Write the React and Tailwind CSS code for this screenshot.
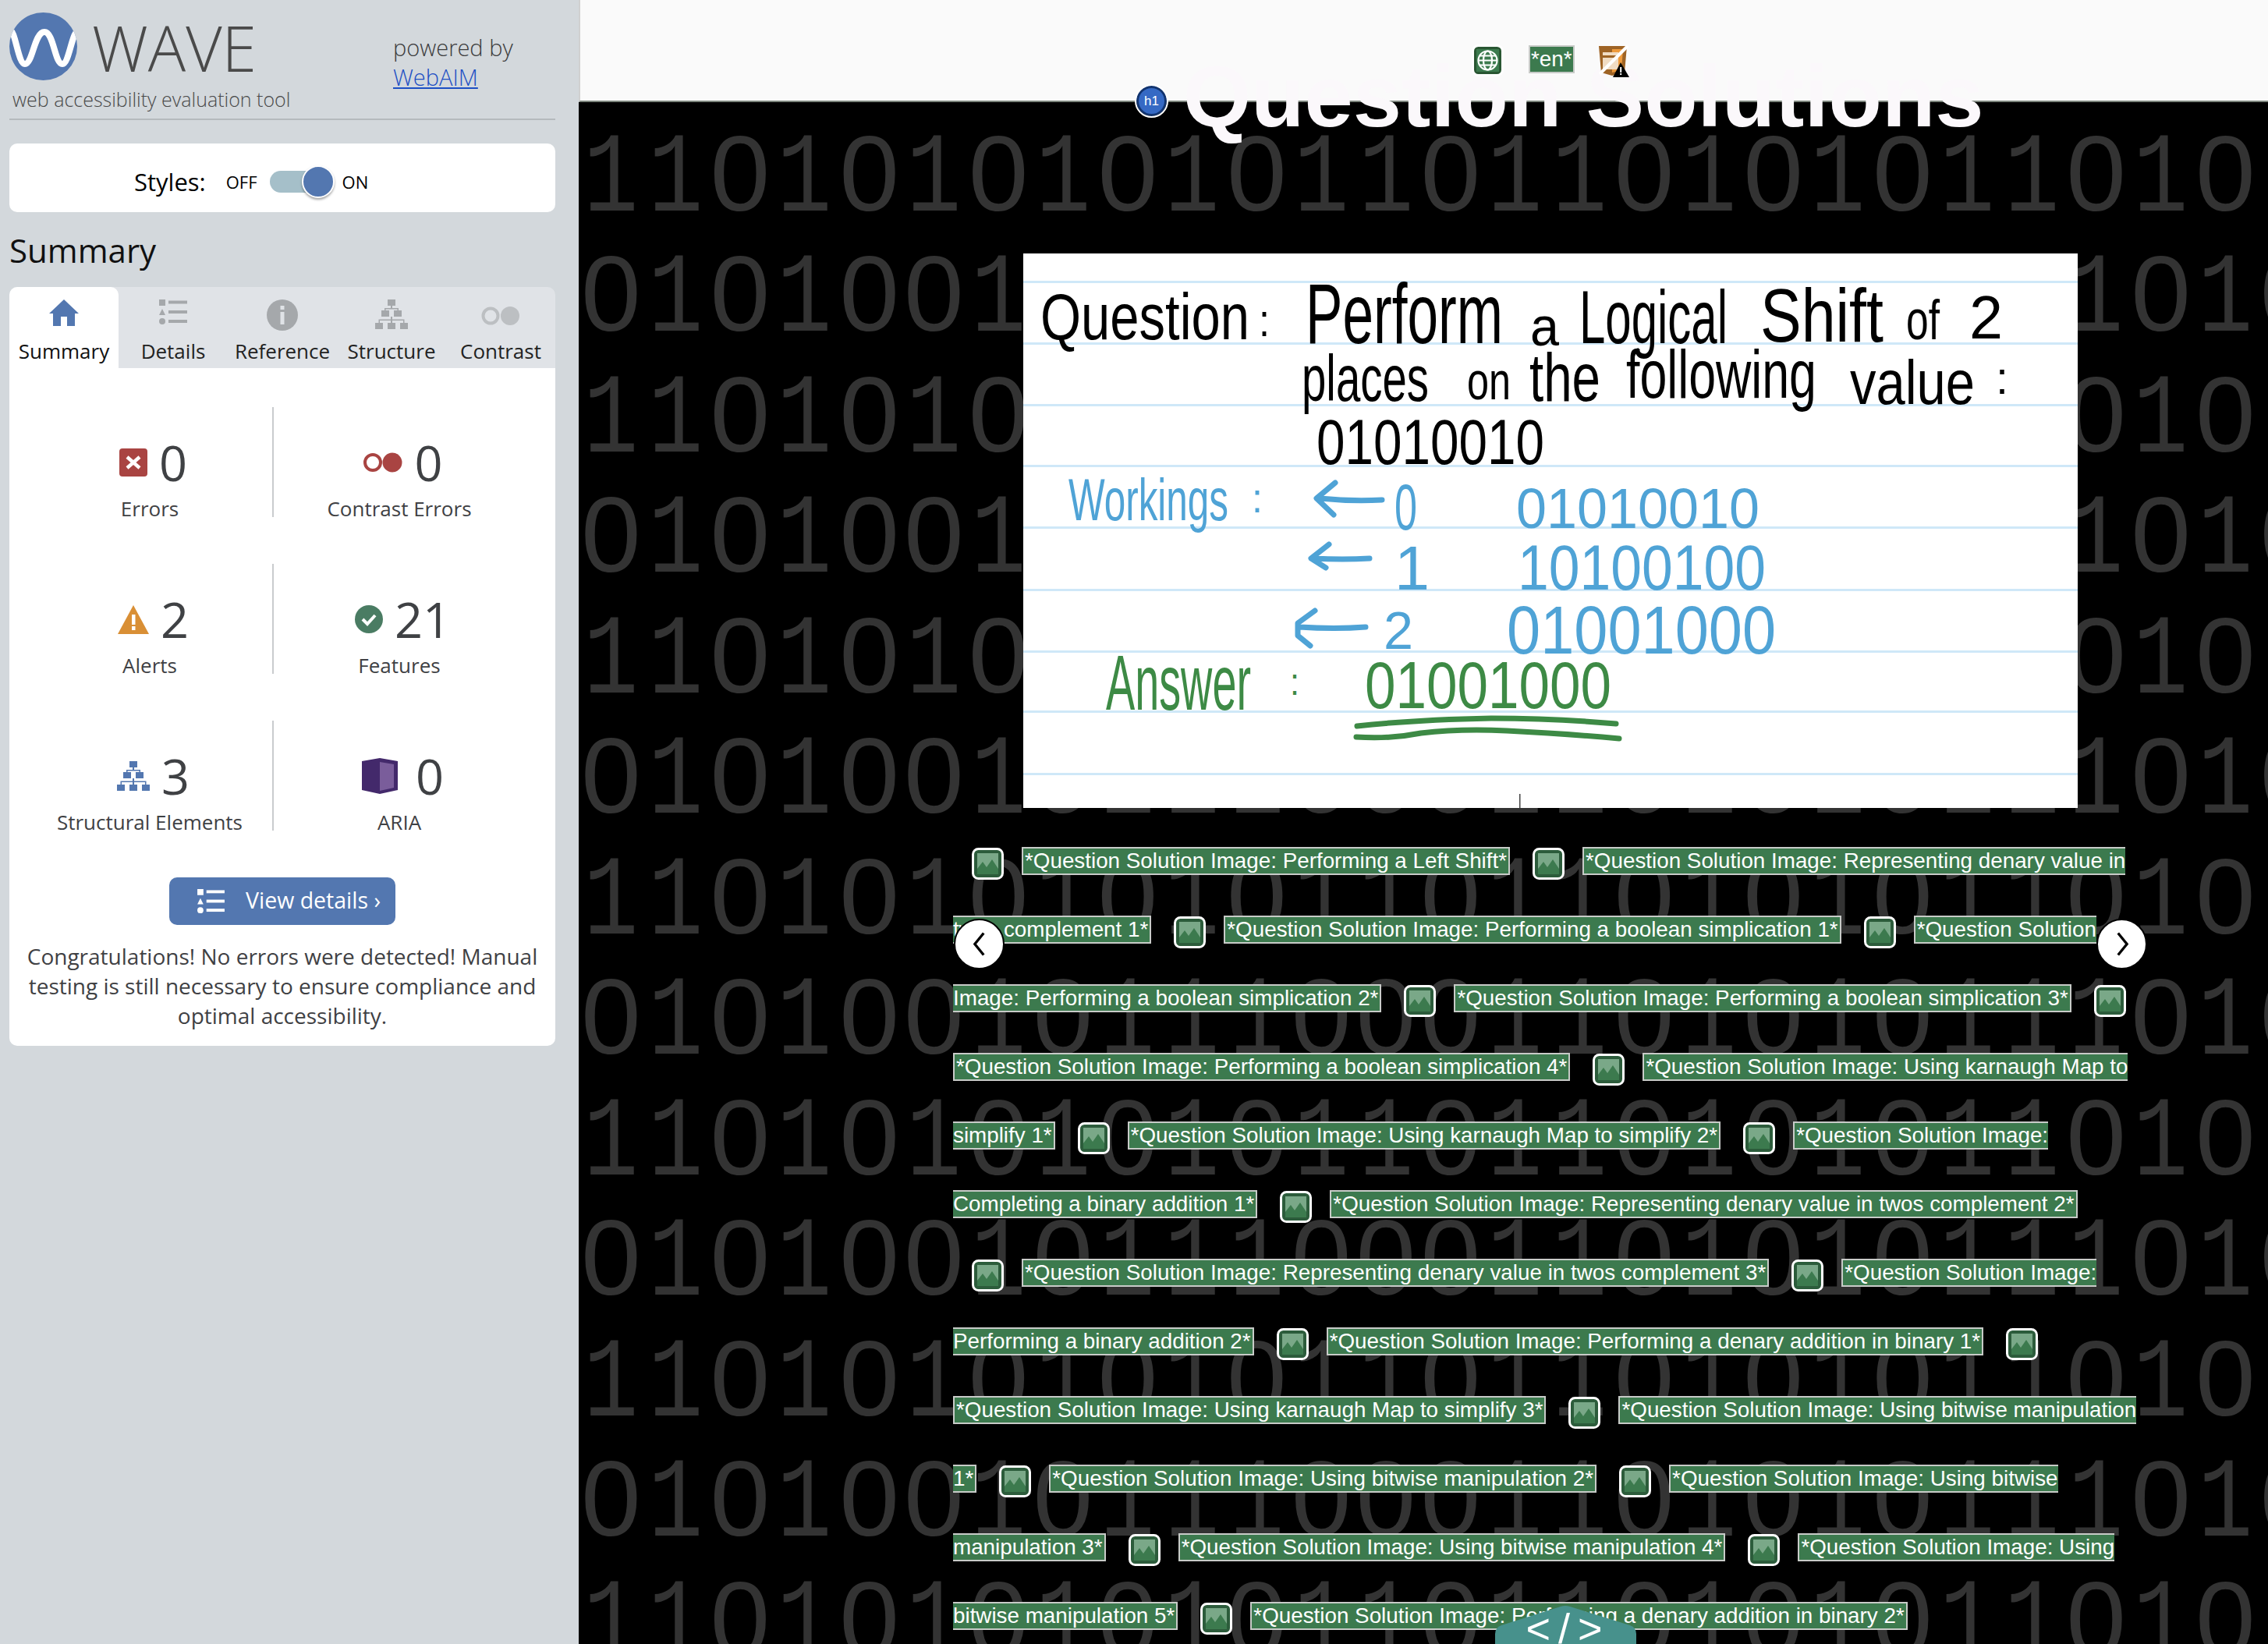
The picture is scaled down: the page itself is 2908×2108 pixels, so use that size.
import React from "react";

const A = "110101010101101101010110101011";
const B = "010100101110001101010111010101";
const bgRows = Array.from({ length: 14 }, (_, i) => (i % 2 === 0 ? A : B));
const Q = "*Question Solution Image: ";

const rows = [
  [["i"], [Q + "Performing a Left Shift*"], ["i"], [Q + "Representing denary value in", "r"]],
  [["twos complement 1*", "l"], ["i"], [Q + "Performing a boolean simplication 1*"], ["i"], ["*Question Solution", "r"]],
  [["Image: Performing a boolean simplication 2*", "l"], ["i"], [Q + "Performing a boolean simplication 3*"], ["i"]],
  [[Q + "Performing a boolean simplication 4*"], ["i"], [Q + "Using karnaugh Map to", "r"]],
  [["simplify 1*", "l"], ["i"], [Q + "Using karnaugh Map to simplify 2*"], ["i"], ["*Question Solution Image:", "r"]],
  [["Completing a binary addition 1*", "l"], ["i"], [Q + "Representing denary value in twos complement 2*"]],
  [["i"], [Q + "Representing denary value in twos complement 3*"], ["i"], ["*Question Solution Image:", "r"]],
  [["Performing a binary addition 2*", "l"], ["i"], [Q + "Performing a denary addition in binary 1*"], ["i"]],
  [[Q + "Using karnaugh Map to simplify 3*"], ["i"], [Q + "Using bitwise manipulation", "r"]],
  [["1*", "l"], ["i"], [Q + "Using bitwise manipulation 2*"], ["i"], ["*Question Solution Image: Using bitwise", "r"]],
  [["manipulation 3*", "l"], ["i"], [Q + "Using bitwise manipulation 4*"], ["i"], ["*Question Solution Image: Using", "r"]],
  [["bitwise manipulation 5*", "l"], ["i"], [Q + "Performing a denary addition in binary 2*"]],
];

function Label({ text, cut }) {
  return (
    <span
      className={
        "shrink-0 whitespace-pre h-[36px] leading-[31px] bg-[#3c7a4e] text-white text-[27.8px] border-y-2 border-[#c8cbc8] " +
        (cut === "l" ? "pr-[2px] border-r-2" : cut === "r" ? "pl-[2px] border-l-2" : "px-[2px] border-x-2")
      }
      style={{ fontFamily: '"Liberation Sans", sans-serif' }}
    >
      {text}
    </span>
  );
}

function ImgIcon({ first }) {
  return (
    <svg
      viewBox="0 0 41 41"
      className={"shrink-0 w-[41px] h-[41px] mt-[7px] mr-[23px] " + (first ? "ml-[24px]" : "ml-[29px]")}
    >
      <rect x="1.5" y="1.5" width="38" height="38" rx="7" fill="#2c5c3b" stroke="#fff" strokeWidth="3" />
      <rect x="7" y="7" width="27" height="27" fill="#7aa888" />
      <path d="M7 34V27L14 18L19 25L26 15L34 27V34Z" fill="#3c7a4e" />
    </svg>
  );
}

function Tree({ color, className }) {
  return (
    <svg viewBox="0 0 42 38" className={className} fill={color}>
      <rect x="16" y="0" width="10" height="8" />
      <rect x="8" y="14" width="10" height="8" />
      <rect x="24" y="14" width="10" height="8" />
      <rect x="0" y="30" width="10" height="8" />
      <rect x="16" y="30" width="10" height="8" />
      <rect x="32" y="30" width="10" height="8" />
      <path d="M20 8h2v3h-2zM12 11h18v1.5H12zM12 11h1.5v3H12zM28.5 11H30v3h-1.5zM20 22h2v8h-2zM5 25.5h32V27H5zM4.5 25.5H6V30H4.5zM36 25.5h1.5V30H36z" />
    </svg>
  );
}

function ListIcon({ color, className }) {
  return (
    <svg viewBox="0 0 36 32" className={className} fill={color}>
      <rect x="0" y="0" width="8" height="8" />
      <path d="M4 12l4 8H0z" />
      <circle cx="4" cy="28" r="4" />
      <rect x="12" y="1.5" width="24" height="4" />
      <rect x="12" y="14" width="24" height="4" />
      <rect x="12" y="26" width="24" height="4" />
    </svg>
  );
}

function Stat({ icon, num, label, gap, divider }) {
  return (
    <div className={"h-[141px] flex flex-col items-center " + (divider ? "border-r-2 border-[#c9cbce]" : "")}>
      <div className={"h-[56px] mt-[43px] pl-[9px] flex items-center " + gap}>
        {icon}
        <span className="text-[63px] leading-[56px] text-[#3f4144]">{num}</span>
      </div>
      <div className="mt-[14px] text-[26px] leading-[34px] text-[#3f4144]">{label}</div>
    </div>
  );
}

function Tab({ active, label, children }) {
  return (
    <div
      className={
        "w-[140px] h-[104px] flex flex-col items-center " +
        (active ? "bg-white rounded-t-[10px] text-[#111]" : "text-[#222]")
      }
    >
      <div className="h-[56px] pt-[16px] flex items-start justify-center">{children}</div>
      <div className="text-[26px] leading-[34px] mt-[9px] whitespace-nowrap">{label}</div>
    </div>
  );
}

function Hand({ x, y, w, size, fill = "#000", children }) {
  return (
    <text
      x={x}
      y={y}
      textLength={w}
      lengthAdjust="spacingAndGlyphs"
      fontSize={size}
      fill={fill}
      fontFamily='"Liberation Sans", sans-serif'
    >
      {children}
    </text>
  );
}

function Notes() {
  const blue = "#4fa3d6";
  const green = "#3d8a45";
  return (
    <svg viewBox="0 0 1352 711" className="block w-[1352px] h-[711px] bg-white mx-auto">
      {[35, 114, 193, 271, 350, 430, 509, 586, 666].map((y) => (
        <rect key={y} x="0" y={y} width="1352" height="3" fill="#cfe8f8" />
      ))}
      <Hand x={22} y={110} w={268} size={84}>Question</Hand>
      <Hand x={302} y={106} w={14} size={60}>:</Hand>
      <Hand x={362} y={115} w={253} size={110}>Perform</Hand>
      <Hand x={650} y={118} w={37} size={70}>a</Hand>
      <Hand x={713} y={115} w={190} size={96}>Logical</Hand>
      <Hand x={945} y={113} w={158} size={96}>Shift</Hand>
      <Hand x={1132} y={110} w={43} size={72}>of</Hand>
      <Hand x={1213} y={109} w={43} size={78}>2</Hand>
      <Hand x={357} y={189} w={163} size={84}>places</Hand>
      <Hand x={569} y={187} w={56} size={68}>on</Hand>
      <Hand x={649} y={189} w={91} size={88}>the</Hand>
      <Hand x={773} y={185} w={244} size={88}>following</Hand>
      <Hand x={1060} y={193} w={160} size={80}>value</Hand>
      <Hand x={1247} y={180} w={16} size={60}>:</Hand>
      <Hand x={376} y={270} w={292} size={82}>01010010</Hand>

      <Hand x={58} y={342} w={205} size={76} fill={blue}>Workings</Hand>
      <Hand x={293} y={332} w={14} size={54} fill={blue}>:</Hand>
      <Hand x={476} y={354} w={29} size={84} fill={blue}>0</Hand>
      <Hand x={632} y={352} w={312} size={72} fill={blue}>01010010</Hand>
      <Hand x={476} y={431} w={45} size={80} fill={blue}>1</Hand>
      <Hand x={634} y={431} w={318} size={82} fill={blue}>10100100</Hand>
      <Hand x={462} y={507} w={38} size={68} fill={blue}>2</Hand>
      <Hand x={620} y={513} w={345} size={88} fill={blue}>01001000</Hand>
      <g fill="none" stroke={blue} strokeWidth="7" strokeLinecap="round" strokeLinejoin="round">
        <path d="M400 294L376 314L398 335M380 314Q420 318 460 316" />
        <path d="M392 373L369 391L388 403M372 391Q410 393 444 391" />
        <path d="M374 458L352 474L352 490L368 503M354 479Q400 482 439 479" />
      </g>

      <Hand x={106} y={585} w={186} size={100} fill={green}>Answer</Hand>
      <Hand x={342} y={566} w={12} size={48} fill={green}>:</Hand>
      <Hand x={438} y={583} w={316} size={86} fill={green}>01001000</Hand>
      <g fill="none" stroke={green} strokeWidth="7" strokeLinecap="round">
        <path d="M428 606Q500 598 600 596Q680 596 760 603" />
        <path d="M427 620Q470 623 510 615Q560 609 620 612Q700 616 764 622" />
      </g>
      <rect x="636" y="693" width="1.5" height="18" fill="#444" />
    </svg>
  );
}

function CircleBtn({ className, d }) {
  return (
    <div className={"absolute top-[1178px] w-[65px] h-[65px] rounded-full bg-white border-2 border-black z-10 flex items-center justify-center " + className}>
      <svg viewBox="0 0 24 40" className="w-[22px] h-[35px]" fill="none" stroke="#000" strokeWidth="3.8">
        <path d={d} />
      </svg>
    </div>
  );
}

function Digit({ c }) {
  return c === "1" ? (
    <span className="inline-flex justify-center w-[82.8px] text-[146px] scale-x-[0.8]" style={{ fontFamily: '"Liberation Mono", monospace' }}>1</span>
  ) : (
    <span className="inline-flex justify-center w-[82.8px] text-[138px]" style={{ fontFamily: '"Liberation Sans", sans-serif' }}>0</span>
  );
}

export default function App() {
  return (
    <div className="flex w-[2908px] h-[2108px] overflow-hidden" style={{ fontFamily: '"Open Sans", sans-serif' }}>
      <aside className="w-[742px] h-[2108px] shrink-0 bg-[#d3d8dc] pl-[12px] pr-[30px]">
        <header className="h-[154px] border-b-2 border-[#b5babd] flex">
          <div className="w-[492px] pt-[16px]">
            <div className="flex items-center h-[87px]">
              <svg viewBox="0 0 87 87" className="w-[87px] h-[87px]">
                <circle cx="43.5" cy="43.5" r="43.5" fill="#5377b0" />
                <clipPath id="wavec"><circle cx="43.5" cy="43.5" r="43.5" /></clipPath>
                <path clipPath="url(#wavec)" d="M0 22C8 22 11 66 20 66C30 66 32 25 45 25C57 25 58 66 68 66C77 66 80 22 90 22" fill="none" stroke="#fff" strokeWidth="8" />
              </svg>
              <span className="ml-[19px] text-[80.5px] leading-[87px] font-light text-[#4a4a4a] mt-[4px]">WAVE</span>
            </div>
            <div className="mt-[8px] pl-[4px] text-[25px] leading-[32px] font-light text-[#4a4a4a] whitespace-nowrap">web accessibility evaluation tool</div>
          </div>
          <div className="pt-[42px] text-[29px] leading-[38px] font-light text-[#3c3c3c]">
            <div>powered by</div>
            <div className="text-[#1c4fc4] underline">WebAIM</div>
          </div>
        </header>

        <div className="mt-[30px] h-[88px] bg-white rounded-[10px] flex items-center pt-[10px] pl-[160px] text-black">
          <span className="text-[31px] leading-[40px]">Styles:</span>
          <span className="ml-[26px] text-[22px]">OFF</span>
          <div className="ml-[16px] w-[83px] h-[41px] flex items-center">
            <div className="w-[60px] h-[28px] rounded-l-full bg-[#a5bfc9]" />
            <div className="w-[42px] h-[42px] -ml-[19px] rounded-full bg-[#5377b0] border-2 border-white shadow-[0_2px_3px_rgba(0,0,0,0.35)]" />
          </div>
          <span className="ml-[10px] text-[22px]">ON</span>
        </div>

        <h2 className="mt-[19px] h-[60px] mb-[17px] text-[42px] leading-[60px] text-[#111]">Summary</h2>

        <div className="flex h-[104px] bg-[#e0e3e7] rounded-t-[10px]">
          <Tab active label="Summary">
            <svg viewBox="0 0 38 34" className="w-[38px] h-[34px]" fill="#5377b0">
              <path d="M19 0L38 18H33V34H23V22H15V34H5V18H0Z" />
            </svg>
          </Tab>
          <Tab label="Details"><ListIcon color="#a5a8ab" className="w-[36px] h-[32px]" /></Tab>
          <Tab label="Reference">
            <svg viewBox="0 0 40 40" className="w-[40px] h-[40px]">
              <circle cx="20" cy="20" r="20" fill="#a5a8ab" />
              <rect x="17.5" y="8" width="5" height="5" fill="#e0e3e7" />
              <rect x="17.5" y="16" width="5" height="16" fill="#e0e3e7" />
            </svg>
          </Tab>
          <Tab label="Structure"><Tree color="#a5a8ab" className="w-[42px] h-[38px]" /></Tab>
          <Tab label="Contrast">
            <svg viewBox="0 0 50 26" className="w-[50px] h-[26px] mt-[8px]">
              <circle cx="12" cy="13" r="9.5" fill="none" stroke="#bcbfc2" strokeWidth="4" />
              <circle cx="37" cy="13" r="12" fill="#bcbfc2" />
            </svg>
          </Tab>
        </div>

        <div className="bg-white rounded-b-[10px] pt-[50px] pb-[20px]">
          <div className="ml-[23px] w-[638px] grid grid-cols-[316px_322px] gap-y-[60px]">
            <Stat divider gap="gap-[15px]" num="0" label="Errors" icon={
              <svg viewBox="0 0 36 36" className="w-[36px] h-[36px]">
                <rect width="36" height="36" rx="4" fill="#a94442" />
                <path d="M10 11L26 25M26 11L10 25" stroke="#fff" strokeWidth="4.5" />
              </svg>
            } />
            <Stat gap="gap-[15px]" num="0" label="Contrast Errors" icon={
              <svg viewBox="0 0 51 26" className="w-[51px] h-[26px]">
                <circle cx="13" cy="13" r="10" fill="none" stroke="#a94442" strokeWidth="4" />
                <circle cx="38" cy="13" r="12.5" fill="#a94442" />
              </svg>
            } />
            <Stat divider gap="gap-[15px]" num="2" label="Alerts" icon={
              <svg viewBox="0 0 40 37" className="w-[40px] h-[37px]">
                <path d="M20 0L40 37H0Z" fill="#d98f35" />
                <rect x="18" y="12" width="4.5" height="13" fill="#fff" />
                <rect x="18" y="27" width="4.5" height="5" fill="#fff" />
              </svg>
            } />
            <Stat gap="gap-[15px]" num="21" label="Features" icon={
              <svg viewBox="0 0 36 36" className="w-[36px] h-[36px]">
                <circle cx="18" cy="18" r="18" fill="#4a7c63" />
                <path d="M10 18L16 24L26 13" fill="none" stroke="#fff" strokeWidth="4" />
              </svg>
            } />
            <Stat divider gap="gap-[15px]" num="3" label="Structural Elements" icon={<Tree color="#5377b0" className="w-[42px] h-[38px]" />} />
            <Stat gap="gap-[23px]" num="0" label="ARIA" icon={
              <svg viewBox="0 0 46 46" className="w-[46px] h-[46px]">
                <path d="M0 4L23 0L46 4V41L23 46L0 41Z" fill="#43296b" />
                <path d="M23 5L41 8V38L23 42Z" fill="#7a5d9b" />
              </svg>
            } />
          </div>

          <div className="mt-[60px] mx-auto w-[290px] h-[61px] rounded-[10px] bg-[#5377b0] flex items-center pl-[35px] text-white">
            <ListIcon color="#fff" className="w-[37px] h-[31px]" />
            <span className="ml-[26px] text-[28.5px] leading-[40px] whitespace-nowrap -mt-[3px]">View details ›</span>
          </div>

          <p className="mt-[21px] px-[10px] text-center text-[28px] leading-[38px] text-[#3f4144]">
            Congratulations! No errors were detected! Manual testing is still necessary to ensure compliance and optimal accessibility.
          </p>
        </div>
      </aside>

      <main className="relative w-[2166px] h-[2108px] overflow-hidden bg-black" style={{ fontFamily: '"Liberation Sans", sans-serif' }}>
        <div className="absolute left-0 top-[144.5px] leading-[154.5px] text-[#333333] whitespace-pre">
          {bgRows.map((r, i) => (
            <div key={i} className="h-[154.5px] flex items-baseline">
              {r.split("").map((c, j) => <Digit key={j} c={c} />)}
            </div>
          ))}
        </div>

        <div className="relative h-[131px] bg-[#fafafa] border-b-2 border-l-2 border-b-[#7c847c] border-l-[#d0d0d0] flex items-start pt-[57px] pl-[1143px]">
          <svg viewBox="0 0 41 41" className="relative z-20 w-[41px] h-[41px] shrink-0">
            <rect x="1.5" y="1.5" width="38" height="38" rx="7" fill="#295632" stroke="#fff" strokeWidth="3" />
            <rect x="6" y="6" width="29" height="29" fill="#3c7a4e" />
            <g fill="none" stroke="#fff" strokeWidth="2.2">
              <circle cx="20.5" cy="20.5" r="12" />
              <ellipse cx="20.5" cy="20.5" rx="5.5" ry="12" />
              <path d="M8.5 20.5H32.5M10 14.5H31M10 26.5H31" />
            </g>
          </svg>
          <span className="relative z-20 ml-[32px] shrink-0 h-[36px] mt-px px-[1px] leading-[32px] bg-[#3c7a4e] text-white text-[27.8px] border-2 border-[#c8cbc8]">*en*</span>
          <svg viewBox="0 0 42 42" className="relative z-20 ml-[28px] w-[42px] h-[42px] shrink-0">
            <path d="M3 2H39L36 36L20 40L6 36Z" fill="#9e6325" />
            <path d="M20 6H34L32 33L20 36Z" fill="#ee9a3c" />
            <rect x="8" y="10" width="20" height="22" fill="#f0dcc4" />
            <rect x="8" y="14" width="20" height="3" fill="#9e6325" />
            <path d="M4 38L40 2" stroke="#fff" strokeWidth="4" />
            <path d="M31 23L42 42H21Z" fill="#000" />
            <rect x="30.2" y="29" width="2" height="7" fill="#fff" />
            <rect x="30.2" y="37" width="2" height="2" fill="#fff" />
          </svg>
        </div>

        <h1 className="absolute left-[775px] top-[68px] text-[112px] leading-[112px] font-bold text-[#fbf8fb] whitespace-nowrap z-10">Question Solutions</h1>
        <div className="absolute left-[715px] top-[110px] w-[39px] h-[39px] rounded-full bg-[#3569c4] border-[3px] border-[#12346f] outline-2 outline-white flex items-center justify-center text-white text-[17px] leading-none z-20">h1</div>

        <div className="relative mt-[194px] ml-[570px] w-[1352px]"><Notes /></div>

        <div className="relative mt-[24px] ml-[480px]">
          {rows.map((row, ri) => (
            <div key={ri} className="h-[88px] flex items-center">
              {row.map((it, i) =>
                it[0] === "i" ? <ImgIcon key={i} first={i === 0} /> : <Label key={i} text={it[0]} cut={it[1]} />
              )}
            </div>
          ))}
        </div>

        <CircleBtn className="left-[481px]" d="M18 4L5 20L18 36" />
        <CircleBtn className="left-[1946px]" d="M6 4L19 20L6 36" />

        <div className="absolute left-[1175px] top-[2059px] w-[181px] h-[49px] z-10">
          <svg viewBox="0 0 181 49" className="absolute inset-0 w-[181px] h-[49px]">
            <path d="M0 49V36Q0 28 8 25L84 1Q90 -1 96 1L173 25Q181 28 181 36V49Z" fill="#47918c" />
          </svg>
          <div className="relative text-center text-white text-[54px] leading-[58px] tracking-[10px] pl-[6px]">&lt;/&gt;</div>
        </div>
      </main>
    </div>
  );
}
